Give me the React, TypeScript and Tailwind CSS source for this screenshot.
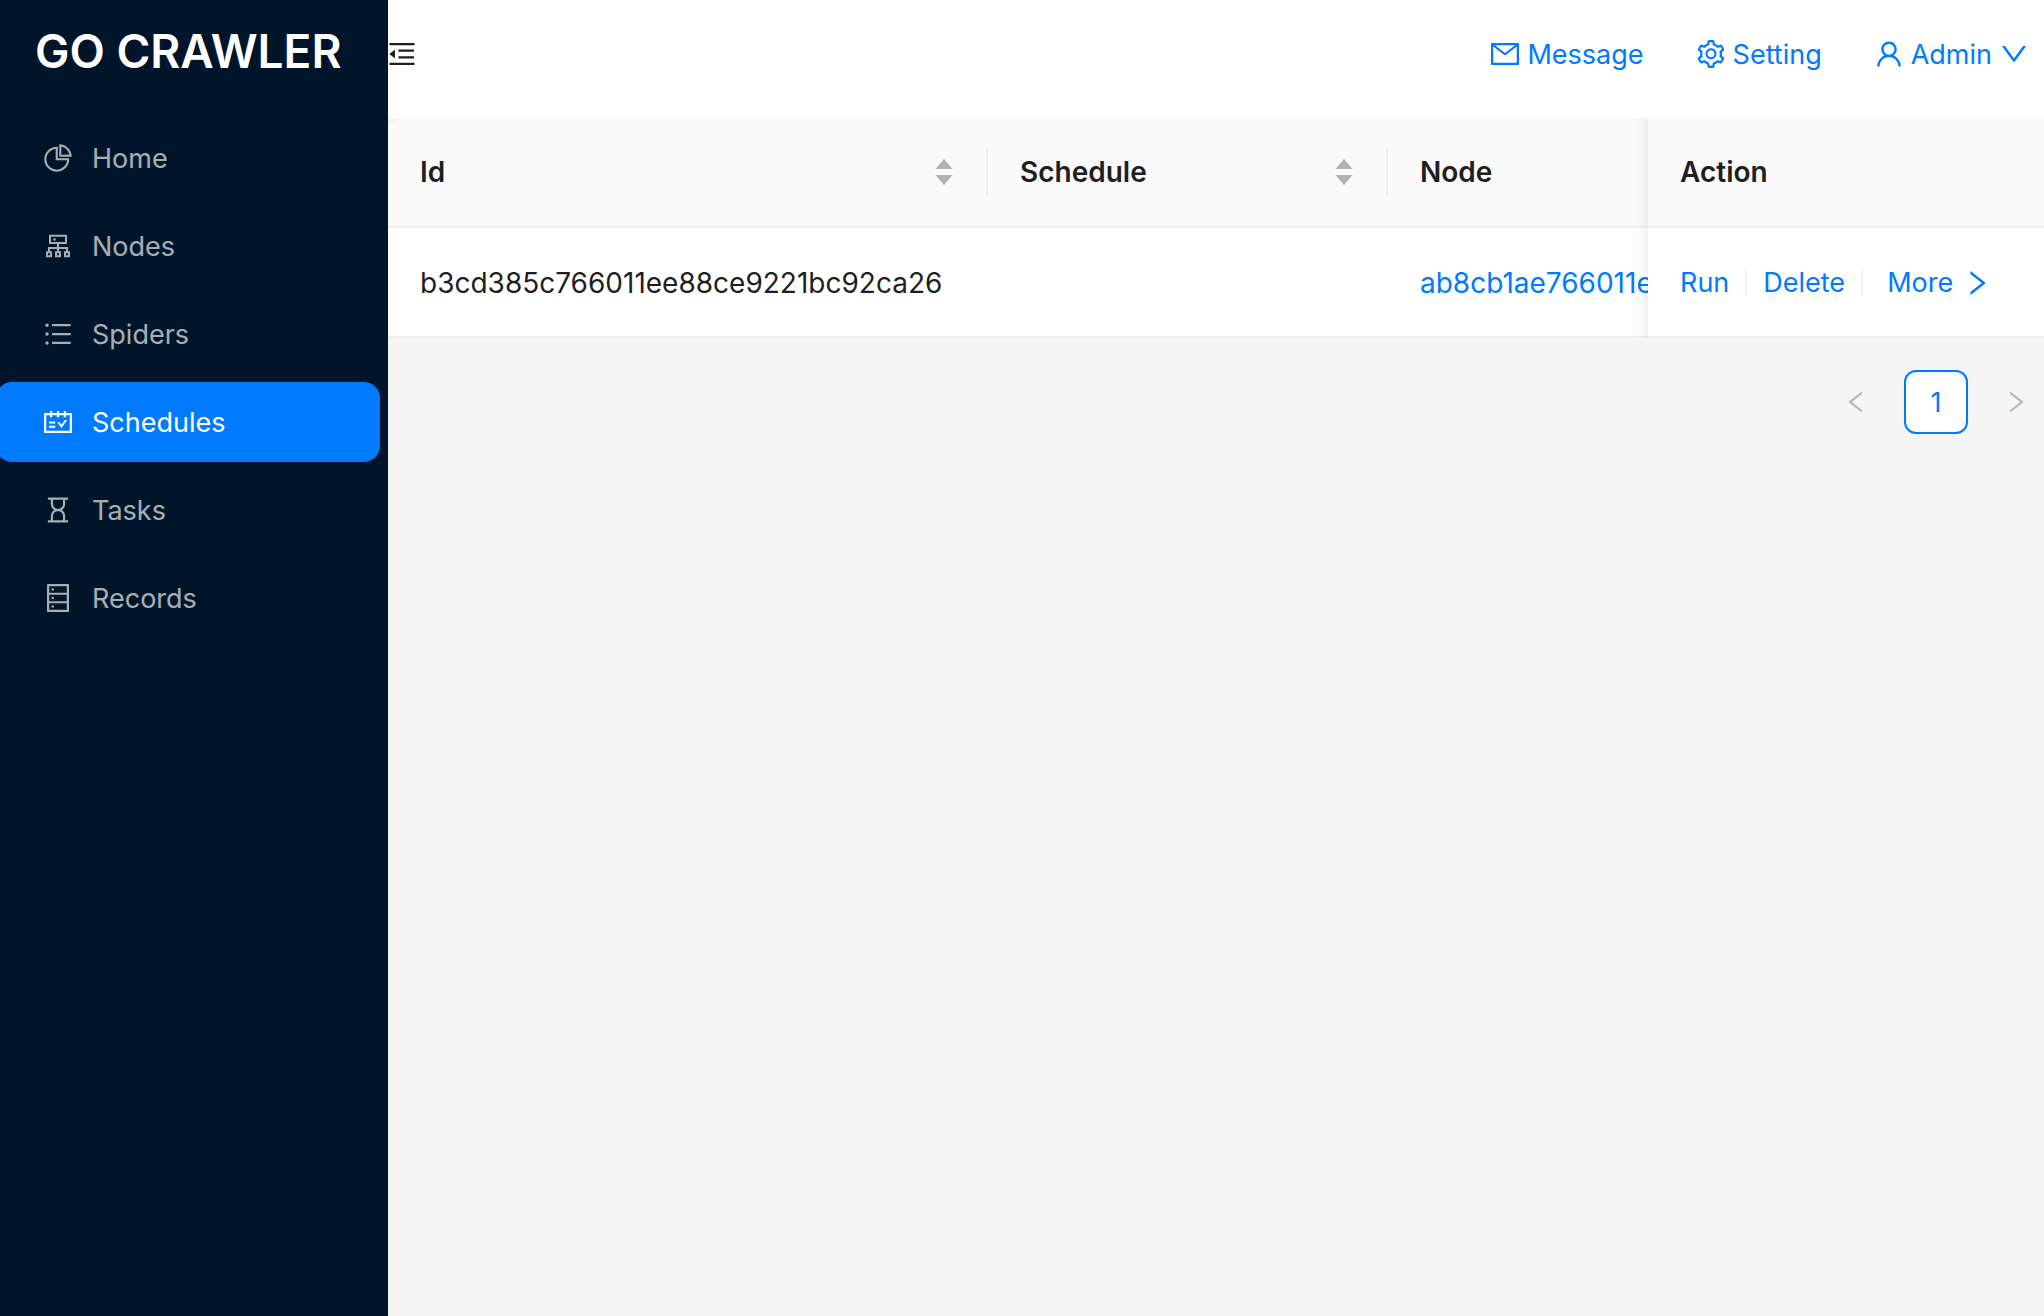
import type { ReactNode } from "react";
import type { IconType } from "react-icons";
import {
  AiOutlineCluster,
  AiOutlineDatabase,
  AiOutlineDown,
  AiOutlineHourglass,
  AiOutlineLeft,
  AiOutlineMail,
  AiOutlineMenuFold,
  AiOutlinePieChart,
  AiOutlineRight,
  AiOutlineSchedule,
  AiOutlineSetting,
  AiOutlineUnorderedList,
  AiOutlineUser,
} from "react-icons/ai";

const menu: { label: string; icon: IconType; active?: boolean }[] = [
  { label: "Home", icon: AiOutlinePieChart },
  { label: "Nodes", icon: AiOutlineCluster },
  { label: "Spiders", icon: AiOutlineUnorderedList },
  { label: "Schedules", icon: AiOutlineSchedule, active: true },
  { label: "Tasks", icon: AiOutlineHourglass },
  { label: "Records", icon: AiOutlineDatabase },
];

/* The icon glyphs carry their own margin, so the box is 32px in a 28px slot. */
function Icon({ of: Glyph }: { of: IconType }) {
  return <Glyph className="-m-0.5 size-8 shrink-0" />;
}

function Sidebar() {
  return (
    <aside className="w-[388px] shrink-0 overflow-hidden bg-[#001529]">
      <h1 className="pt-5 pl-[35px] text-[46px] leading-[62px] font-semibold whitespace-nowrap text-white">
        GO CRAWLER
      </h1>
      <nav className="mt-9 mr-2 -ml-1 flex flex-col gap-2">
        {menu.map(({ label, icon, active }) => (
          <a
            key={label}
            href="#"
            aria-current={active ? "page" : undefined}
            className={
              "flex h-20 items-center gap-5 rounded-2xl pl-12 " +
              (active ? "bg-[#007aff] text-white" : "text-white/65")
            }
          >
            <Icon of={icon} />
            <span className="pt-0.5">{label}</span>
          </a>
        ))}
      </nav>
    </aside>
  );
}

function Header() {
  return (
    <header className="flex h-[118px] items-start justify-between bg-white pr-4">
      <button type="button" aria-label="Collapse menu" className="flex h-[108px] items-center">
        <Icon of={AiOutlineMenuFold} />
      </button>
      <div className="flex h-[108px] items-center gap-[53px] text-[#007aff]">
        <a href="#" className="flex items-center gap-2">
          <Icon of={AiOutlineMail} />
          <span className="pt-0.5">Message</span>
        </a>
        <a href="#" className="flex items-center gap-2">
          <Icon of={AiOutlineSetting} />
          <span className="pt-0.5">Setting</span>
        </a>
        <button type="button" className="flex items-center gap-2">
          <Icon of={AiOutlineUser} />
          <span className="pt-0.5">Admin</span>
          <Icon of={AiOutlineDown} />
        </button>
      </div>
    </header>
  );
}

function SortButton({ label }: { label: string }) {
  return (
    <button type="button" aria-label={label} className="text-[#b3b3b3]">
      <svg viewBox="0 0 20 26" className="h-[26px] w-5" fill="currentColor">
        <path d="M10 0 18.5 10h-17zM10 26 1.5 16h17z" />
      </svg>
    </button>
  );
}

function HeadCell({ children, sortable }: { children: string; sortable?: boolean }) {
  return (
    <th scope="col" className="p-0 text-left font-semibold">
      <div
        className={
          "flex h-11 items-center justify-between pl-8 " +
          (sortable ? "border-r-2 border-[#f0f0f0] pr-8" : "")
        }
      >
        {children}
        {sortable && <SortButton label={"Sort by " + children} />}
      </div>
    </th>
  );
}

function Divider() {
  return <span className="h-[26px] w-[2px] bg-[#f0f0f0]" />;
}

function FixedShade() {
  return (
    <span className="pointer-events-none absolute inset-y-0 right-full -bottom-[2px] w-[60px] shadow-[inset_-20px_0_16px_-16px_rgba(5,5,5,0.07)]" />
  );
}

function Link({ children }: { children: ReactNode }) {
  return (
    <a href="#" className="text-[#007aff]">
      {children}
    </a>
  );
}

function ScheduleTable() {
  return (
    <table className="w-full table-fixed border-separate border-spacing-0 text-[28px] leading-[44px]">
      <colgroup>
        <col className="w-[600px]" />
        <col className="w-[400px]" />
        <col />
        <col className="w-[396px]" />
      </colgroup>
      <thead>
        <tr className="h-[110px] [&>th]:border-b-2 [&>th]:border-[#f0f0f0] [&>th]:bg-[#fafafa] [&>th:first-child]:rounded-tl-2xl">
          <HeadCell sortable>Id</HeadCell>
          <HeadCell sortable>Schedule</HeadCell>
          <HeadCell>Node</HeadCell>
          <th scope="col" className="relative px-8 text-left font-semibold">
            <FixedShade />
            Action
          </th>
        </tr>
      </thead>
      <tbody>
        <tr className="h-[110px] [&>td]:border-b-2 [&>td]:border-[#f0f0f0] [&>td]:bg-white">
          <td className="px-8 pt-0.5">b3cd385c766011ee88ce9221bc92ca26</td>
          <td />
          <td className="overflow-hidden pt-0.5 pl-8 whitespace-nowrap">
            <Link>ab8cb1ae766011ee</Link>
          </td>
          <td className="relative px-8 pt-0.5 text-[27px]">
            <FixedShade />
            <div className="flex items-center gap-4">
              <Link>Run</Link>
              <Divider />
              <Link>Delete</Link>
              <Divider />
              <button type="button" className="ml-2 flex items-center gap-2.5 text-[#007aff]">
                More
                <Icon of={AiOutlineRight} />
              </button>
            </div>
          </td>
        </tr>
      </tbody>
    </table>
  );
}

function Pagination() {
  return (
    <nav aria-label="Pagination" className="mt-8 -mr-1 flex justify-end gap-4">
      <button type="button" aria-label="Previous page" className="flex size-16 items-center justify-center text-[#b8b8b8]">
        <AiOutlineLeft className="size-7" />
      </button>
      <button
        type="button"
        aria-current="page"
        className="size-16 rounded-xl border-2 border-[#007aff] bg-white pt-0.5 text-[#007aff]"
      >
        1
      </button>
      <button type="button" aria-label="Next page" className="flex size-16 items-center justify-center text-[#b8b8b8]">
        <AiOutlineRight className="size-7" />
      </button>
    </nav>
  );
}

export default function App() {
  return (
    <div className="flex min-h-screen bg-[#f5f5f5] font-['Inter',sans-serif] text-[27px] leading-[44px] text-[#1f1f1f]">
      <Sidebar />
      <div className="min-w-0 flex-1 overflow-hidden">
        <Header />
        <main>
          <ScheduleTable />
          <Pagination />
        </main>
      </div>
    </div>
  );
}
